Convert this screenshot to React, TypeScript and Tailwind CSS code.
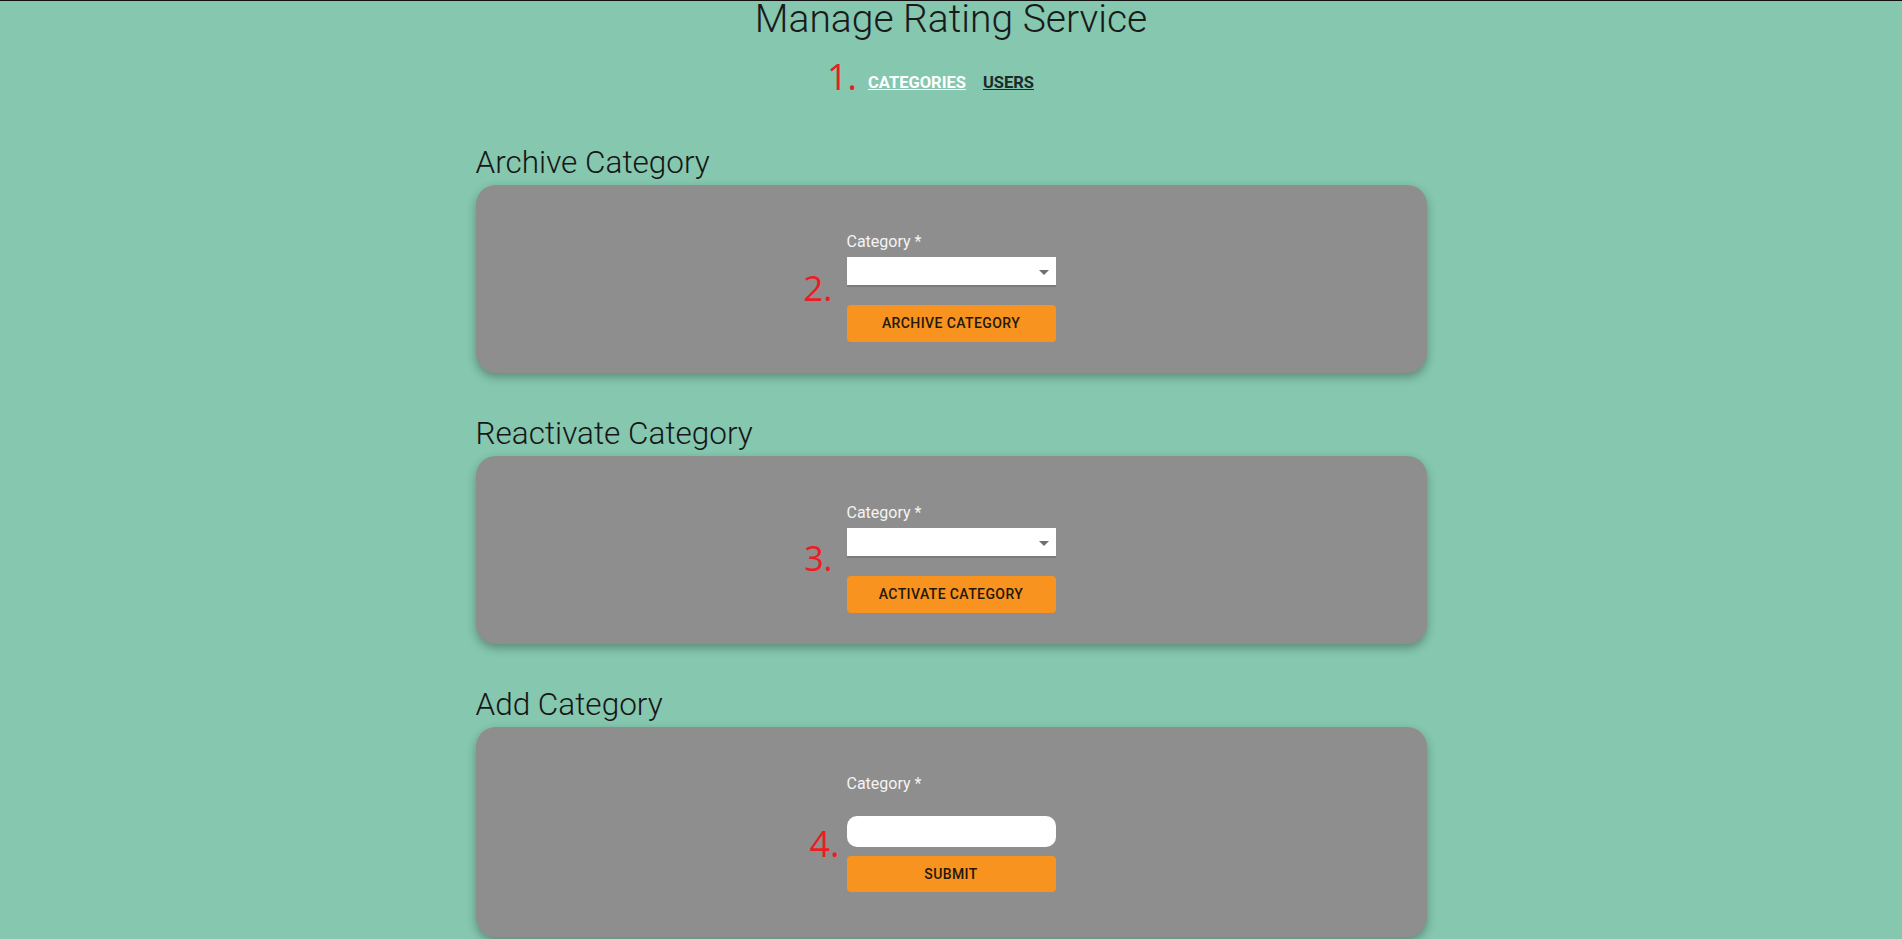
import React from "react";

const roboto = { fontFamily: "Roboto, 'Liberation Sans', sans-serif" };

function Num({ n, cls }: { n: string; cls: string }) {
  return (
    <span
      className={"absolute right-full font-normal text-[#ec1c24] whitespace-nowrap " + cls}
      style={{ fontFamily: "'Open Sans', 'Noto Sans', sans-serif" }}
    >
      {n}
    </span>
  );
}

function SelectField({ num, numCls, button }: { num: string; numCls: string; button: string }) {
  return (
    <div className="relative w-[209px] flex flex-col">
      <Num n={num} cls={numCls} />
      <label className="text-[16px] leading-[20px] text-[#f4f4f4]">Category *</label>
      <div className="relative mt-[5px] h-[30px] bg-white border-b-2 border-[#7b7b7b]">
        <span className="absolute right-[7px] top-[13px] w-0 h-0 border-l-[5px] border-r-[5px] border-t-[5px] border-l-transparent border-r-transparent border-t-[#6f6f6f]" />
      </div>
      <button className="mt-[18px] h-[37px] rounded-[4px] bg-[#f7931e] text-[14px] font-medium tracking-[0.4px] text-[#24180c] uppercase">
        {button}
      </button>
    </div>
  );
}

function Section({ title, first, children, tall }: { title: string; first?: boolean; children: React.ReactNode; tall?: boolean }) {
  return (
    <section className={first ? "mt-[50px]" : "mt-[43px]"}>
      <h2 className="text-[31.5px] leading-[36px] font-light text-[#161616] mb-[4px]">{title}</h2>
      <div
        className={
          "bg-[#8e8e8e] rounded-[20px] shadow-[0_4px_10px_rgba(0,0,0,0.3)] flex justify-center pt-[47px] " +
          (tall ? "h-[210px]" : "h-[188px]")
        }
      >
        {children}
      </div>
    </section>
  );
}

export default function App() {
  return (
    <div className="h-screen overflow-hidden bg-[#85c7af] border-t border-[#111]" style={roboto}>
      <h1 className="text-center text-[39px] leading-[36px] font-light text-[#1a1a1a]">Manage Rating Service</h1>
      <nav className="mt-[34px] flex justify-center">
        <div className="relative flex gap-[17px] text-[16.5px] leading-[24px] font-bold">
          <Num n="1." cls="mr-[11px] top-[-12px] text-[36px] leading-[36px]" />
          <a href="#" className="underline text-white">CATEGORIES</a>
          <a href="#" className="underline text-[#1b2a2a]">USERS</a>
        </div>
      </nav>
      <main className="w-[951px] mx-auto">
        <Section title="Archive Category" first>
          <SelectField num="2." numCls="mr-[14px] top-[38px] text-[35px] leading-[35px]" button="Archive Category" />
        </Section>
        <Section title="Reactivate Category">
          <SelectField num="3." numCls="mr-[14px] top-[38px] text-[34px] leading-[34px]" button="Activate Category" />
        </Section>
        <Section title="Add Category" tall>
          <div className="relative w-[209px] flex flex-col">
            <Num n="4." cls="mr-[7px] top-[52px] text-[36px] leading-[36px]" />
            <label className="text-[16px] leading-[20px] text-[#f4f4f4]">Category *</label>
            <input className="mt-[22px] h-[31px] rounded-[10px] bg-white outline-none px-2" />
            <button className="mt-[9px] h-[36px] rounded-[4px] bg-[#f7931e] text-[14px] font-medium tracking-[0.4px] text-[#24180c] uppercase">
              Submit
            </button>
          </div>
        </Section>
      </main>
    </div>
  );
}
